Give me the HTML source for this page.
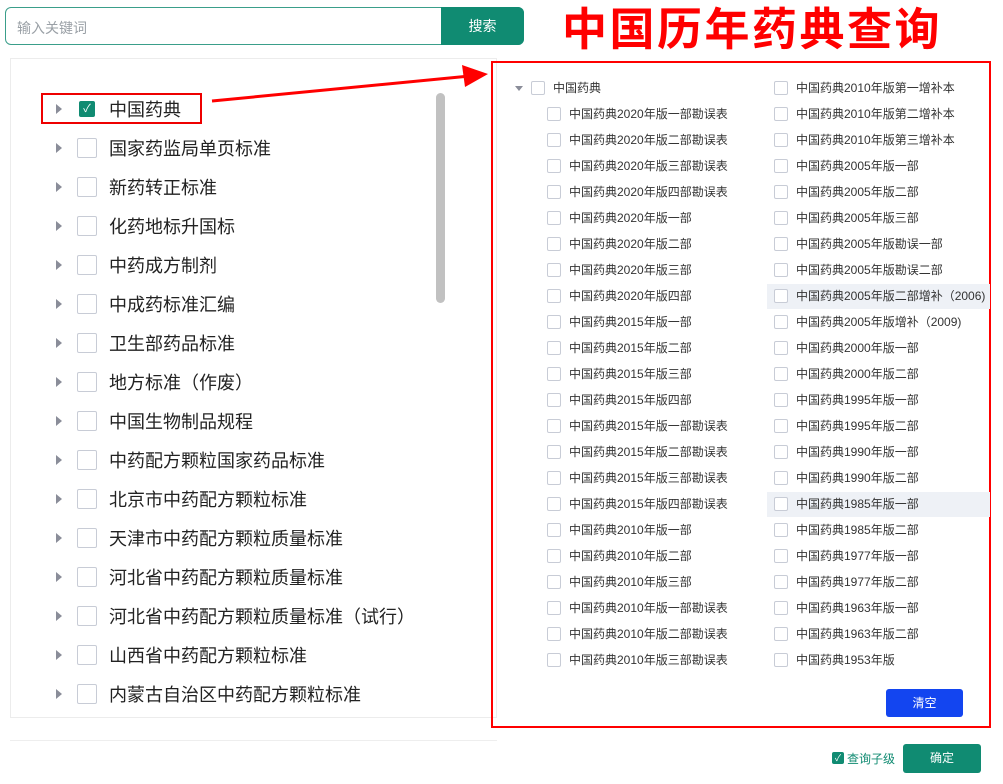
<!DOCTYPE html>
<html><head><meta charset="utf-8"><style>
*{margin:0;padding:0;box-sizing:border-box}
body{width:1003px;height:784px;background:#fff;position:relative;overflow:hidden;font-family:"Liberation Sans","Noto Sans CJK SC",sans-serif;color:#333}
.a{position:absolute}
.cb{position:absolute;border:1px solid #c8ccd6;border-radius:2px;background:#fff}
.L{font-size:18px;line-height:20px;white-space:nowrap;color:#222}
.R{font-size:12px;line-height:14px;white-space:nowrap;color:#333}
.tri{position:absolute;width:0;height:0;border-top:5px solid transparent;border-bottom:5px solid transparent;border-left:6px solid #8a8d99}
</style></head><body>
<div class="a" style="left:5px;top:7px;width:519px;height:38px;border:1px solid #3a9e8a;border-radius:6px"></div>
<div class="a" style="left:17px;top:18px;font-size:14px;color:#9aa0a6">输入关键词</div>
<div class="a" style="left:441px;top:7px;width:83px;height:38px;background:#108b72;border-radius:0 6px 6px 0;color:#fff;font-size:14px;text-align:center;line-height:38px">搜索</div>
<div class="a" style="left:562px;top:4px;font-size:45px;line-height:52px;color:#f00;font-weight:bold;letter-spacing:2.5px">中国历年药典查询</div>
<div class="a" style="left:10px;top:58px;width:487px;height:660px;border:1px solid #ececec"></div>
<div class="a" style="left:10px;top:740px;width:487px;border-top:1px solid #eee"></div>
<div class="a" style="left:436px;top:93px;width:9px;height:210px;background:#c1c1c1;border-radius:5px"></div>
<div id="left"></div>
<div class="a" style="left:41px;top:93px;width:161px;height:31px;border:2px solid #e00"></div>
<svg class="a" style="left:200px;top:60px" width="300" height="50"><line x1="12" y1="41" x2="270" y2="16" stroke="#f00" stroke-width="3"/><polygon points="288,14 262,5 265,27" fill="#f00"/></svg>
<div class="a" style="left:491px;top:61px;width:500px;height:667px;border:2px solid #f00"></div>
<div class="a" style="left:767px;top:284px;width:223px;height:25px;background:#eef1f6"></div>
<div class="a" style="left:767px;top:492px;width:223px;height:25px;background:#eef1f6"></div>
<div id="right"></div>
<div class="a" style="left:886px;top:689px;width:77px;height:28px;background:#1345f0;border-radius:3px;color:#fff;font-size:12px;text-align:center;line-height:28px">清空</div>
<div class="a" style="left:832px;top:752px;width:12px;height:12px;background:#108b72;border-radius:2px;color:#fff;font-size:9px;line-height:12px;text-align:center">✓</div>
<div class="a" style="left:847px;top:750px;font-size:12px;color:#108b72">查询子级</div>
<div class="a" style="left:903px;top:744px;width:78px;height:29px;background:#108b72;border-radius:3px;color:#fff;font-size:12px;text-align:center;line-height:29px">确定</div>
<script>
var L=["中国药典","国家药监局单页标准","新药转正标准","化药地标升国标","中药成方制剂","中成药标准汇编","卫生部药品标准","地方标准（作废）","中国生物制品规程","中药配方颗粒国家药品标准","北京市中药配方颗粒标准","天津市中药配方颗粒质量标准","河北省中药配方颗粒质量标准","河北省中药配方颗粒质量标准（试行）","山西省中药配方颗粒标准","内蒙古自治区中药配方颗粒标准"];
var h="";
L.forEach(function(t,i){var y=109+39*i;
h+='<div class="tri" style="left:56px;top:'+(y-5)+'px"></div>';
if(i==0)h+='<div class="a" style="left:79px;top:'+(y-8)+'px;width:16px;height:16px;background:#108b72;border-radius:2px;color:#fff;font-size:11px;line-height:16px;text-align:center">✓</div>';
else h+='<div class="cb" style="left:77px;top:'+(y-10)+'px;width:20px;height:20px"></div>';
h+='<div class="a L" style="left:109px;top:'+(y-9)+'px">'+t+'</div>';});
document.getElementById("left").innerHTML=h;
var A=["中国药典2020年版一部勘误表","中国药典2020年版二部勘误表","中国药典2020年版三部勘误表","中国药典2020年版四部勘误表","中国药典2020年版一部","中国药典2020年版二部","中国药典2020年版三部","中国药典2020年版四部","中国药典2015年版一部","中国药典2015年版二部","中国药典2015年版三部","中国药典2015年版四部","中国药典2015年版一部勘误表","中国药典2015年版二部勘误表","中国药典2015年版三部勘误表","中国药典2015年版四部勘误表","中国药典2010年版一部","中国药典2010年版二部","中国药典2010年版三部","中国药典2010年版一部勘误表","中国药典2010年版二部勘误表","中国药典2010年版三部勘误表"];
var B=["中国药典2010年版第一增补本","中国药典2010年版第二增补本","中国药典2010年版第三增补本","中国药典2005年版一部","中国药典2005年版二部","中国药典2005年版三部","中国药典2005年版勘误一部","中国药典2005年版勘误二部","中国药典2005年版二部增补（2006)","中国药典2005年版增补（2009)","中国药典2000年版一部","中国药典2000年版二部","中国药典1995年版一部","中国药典1995年版二部","中国药典1990年版一部","中国药典1990年版二部","中国药典1985年版一部","中国药典1985年版二部","中国药典1977年版一部","中国药典1977年版二部","中国药典1963年版一部","中国药典1963年版二部","中国药典1953年版"];
h='<div class="a" style="left:515px;top:86px;border-left:4px solid transparent;border-right:4px solid transparent;border-top:5px solid #8a8d99"></div><div class="cb" style="left:531px;top:81px;width:14px;height:14px"></div><div class="a R" style="left:553px;top:81px">中国药典</div>';
A.forEach(function(t,i){var y=114+26*i;h+='<div class="cb" style="left:547px;top:'+(y-7)+'px;width:14px;height:14px"></div><div class="a R" style="left:569px;top:'+(y-7)+'px">'+t+'</div>';});
B.forEach(function(t,i){var y=88+26*i;h+='<div class="cb" style="left:774px;top:'+(y-7)+'px;width:14px;height:14px"></div><div class="a R" style="left:796px;top:'+(y-7)+'px">'+t+'</div>';});
document.getElementById("right").innerHTML=h;
</script>
</body></html>
